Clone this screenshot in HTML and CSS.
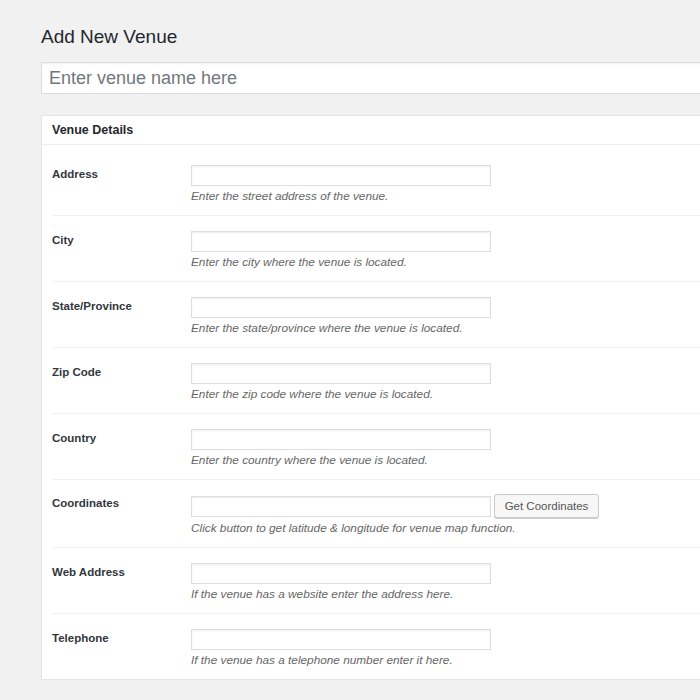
FILE: index.html
```html
<!DOCTYPE html>
<html lang="en">
<head>
    <meta charset="UTF-8">
    <title>Add New Venue</title>
    <link rel="stylesheet" href="styles.css">
</head>
<body>
    <div class="wrap">
        <h1 class="page-title">Add New Venue</h1>
        <input class="title-input" type="text" placeholder="Enter venue name here">

        <div class="postbox">
            <h2 class="hndle">Venue Details</h2>
            <div class="inside">
                <div class="field-row">
                    <label class="field-label">Address</label>
                    <div class="field">
                        <div class="field-line"><input class="text-input" type="text"></div>
                        <p class="description">Enter the street address of the venue.</p>
                    </div>
                </div>
                <div class="field-row">
                    <label class="field-label">City</label>
                    <div class="field">
                        <div class="field-line"><input class="text-input" type="text"></div>
                        <p class="description">Enter the city where the venue is located.</p>
                    </div>
                </div>
                <div class="field-row">
                    <label class="field-label">State/Province</label>
                    <div class="field">
                        <div class="field-line"><input class="text-input" type="text"></div>
                        <p class="description">Enter the state/province where the venue is located.</p>
                    </div>
                </div>
                <div class="field-row">
                    <label class="field-label">Zip Code</label>
                    <div class="field">
                        <div class="field-line"><input class="text-input" type="text"></div>
                        <p class="description">Enter the zip code where the venue is located.</p>
                    </div>
                </div>
                <div class="field-row">
                    <label class="field-label">Country</label>
                    <div class="field">
                        <div class="field-line"><input class="text-input" type="text"></div>
                        <p class="description">Enter the country where the venue is located.</p>
                    </div>
                </div>
                <div class="field-row has-button">
                    <label class="field-label">Coordinates</label>
                    <div class="field">
                        <div class="field-line">
                            <input class="text-input" type="text">
                            <button class="button" type="button">Get Coordinates</button>
                        </div>
                        <p class="description">Click button to get latitude &amp; longitude for venue map function.</p>
                    </div>
                </div>
                <div class="field-row">
                    <label class="field-label">Web Address</label>
                    <div class="field">
                        <div class="field-line"><input class="text-input" type="text"></div>
                        <p class="description">If the venue has a website enter the address here.</p>
                    </div>
                </div>
                <div class="field-row">
                    <label class="field-label">Telephone</label>
                    <div class="field">
                        <div class="field-line"><input class="text-input" type="text"></div>
                        <p class="description">If the venue has a telephone number enter it here.</p>
                    </div>
                </div>
            </div>
        </div>
    </div>
</body>
</html>
```

FILE: styles.css
```css
html, body {
    margin: 0;
    background: #f1f1f1;
    overflow: hidden;
}
body {
    font-family: "Liberation Sans", Arial, sans-serif;
    color: #23282d;
}
.wrap {
    width: 720px;
    padding: 24px 0 0 41px;
}
.page-title {
    margin: 0 0 12px;
    font-size: 19px;
    line-height: 26px;
    font-weight: 400;
    color: #23282d;
}
.title-input {
    display: block;
    box-sizing: border-box;
    width: 100%;
    height: 32px;
    margin: 0 0 21px;
    padding: 0 7px;
    font-family: inherit;
    font-size: 18px;
    color: #32373c;
    background: #fff;
    border: 1px solid #ddd;
    box-shadow: inset 0 1px 2px rgba(0,0,0,.07);
    outline: none;
}
.title-input::placeholder {
    color: #72777c;
}
.postbox {
    background: #fff;
    border: 1px solid #e5e5e5;
    box-shadow: 0 1px 1px rgba(0,0,0,.04);
}
.hndle {
    margin: 0;
    padding: 6px 10px;
    font-size: 12.5px;
    line-height: 16px;
    font-weight: 700;
    border-bottom: 1px solid #eee;
}
.inside {
    padding: 5px 0 0 10px;
}
.field-row {
    display: flex;
    padding: 15px 0 12px;
    border-bottom: 1px solid #f1f1f1;
}
.field-row.has-button {
    padding-top: 14px;
}
.field-row:last-child {
    border-bottom: none;
}
.field-label {
    width: 139px;
    flex-shrink: 0;
    padding-top: 1px;
    font-size: 11.5px;
    line-height: 16px;
    font-weight: 700;
    color: #32373c;
}
.field-line {
    display: flex;
    align-items: center;
    gap: 3px;
}
.text-input {
    box-sizing: border-box;
    width: 300px;
    height: 21px;
    margin: 0;
    background: #fff;
    border: 1px solid #ddd;
    box-shadow: inset 0 1px 2px rgba(0,0,0,.07);
    outline: none;
}
.button {
    width: 105px;
    height: 24px;
    padding: 0;
    font-family: inherit;
    font-size: 11.5px;
    color: #555;
    background: #f7f7f7;
    border: 1px solid #ccc;
    border-radius: 3px;
    box-shadow: 0 1px 0 #ccc;
}
.description {
    margin: 3px 0 0;
    font-size: 11.8px;
    line-height: 14px;
    font-style: italic;
    color: #666;
}
```
